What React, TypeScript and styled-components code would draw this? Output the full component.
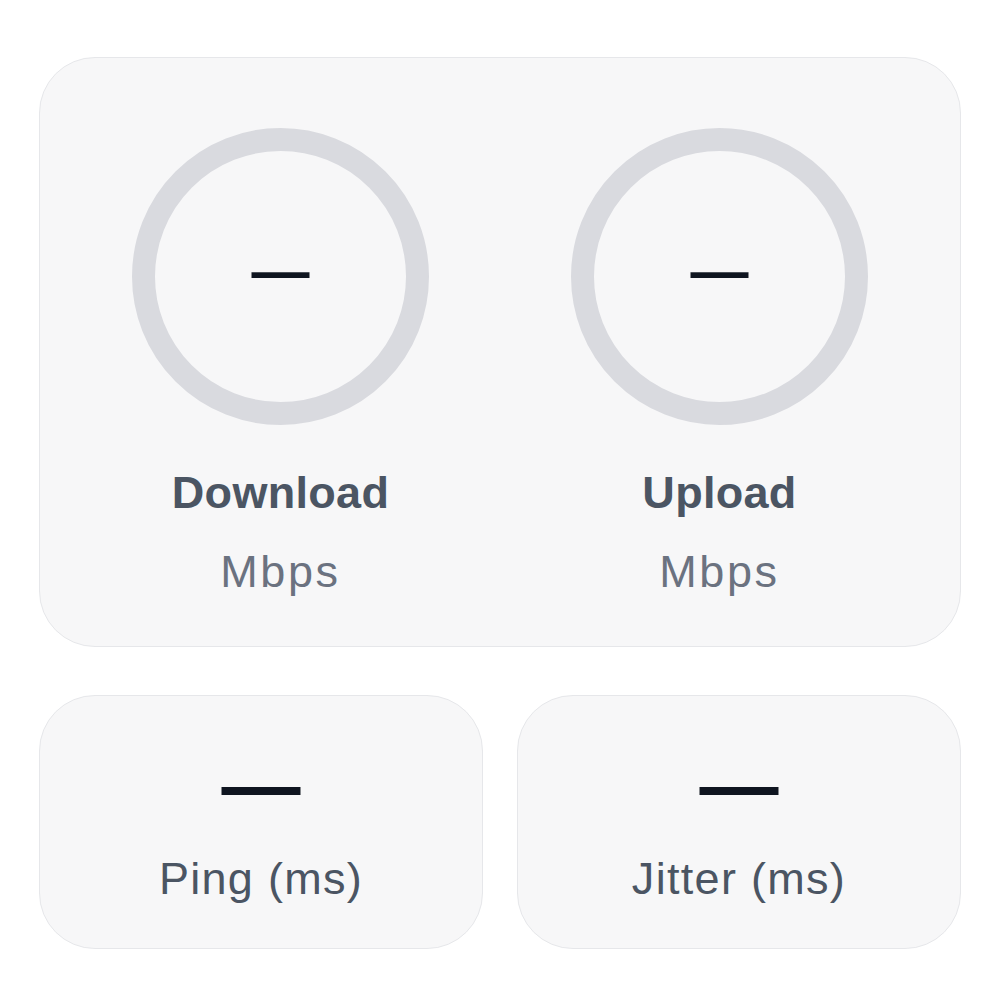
import React from "react";
import styled, { createGlobalStyle } from "styled-components";

const Global = createGlobalStyle`
  html, body { margin: 0; padding: 0; background: #ffffff; }
  body { font-family: "Liberation Sans", Arial, sans-serif; }
`;

const Page = styled.div`
  width: 1000px;
  box-sizing: border-box;
  padding: 57px 39px 0;
  display: flex;
  flex-direction: column;
  gap: 48px;
`;

const MainCard = styled.div`
  box-sizing: border-box;
  height: 590px;
  background: #f7f7f8;
  border: 1px solid #e6e7ea;
  border-radius: 56px;
  display: grid;
  grid-template-columns: 1fr 1fr;
  padding: 70px 56px 0;
  column-gap: 70px;
`;

const Gauge = styled.div`
  display: flex;
  flex-direction: column;
  align-items: center;
`;

const Ring = styled.div`
  box-sizing: border-box;
  width: 297px;
  height: 297px;
  border-radius: 50%;
  border: 23px solid #d9dadf;
  display: flex;
  align-items: center;
  justify-content: center;
  padding-bottom: 12px;
`;

const Dash = styled.div<{ $size: number }>`
  font-family: "Liberation Sans", Arial, sans-serif;
  font-weight: 700;
  font-size: ${(p) => p.$size}px;
  line-height: 1;
  color: #0f1520;
`;

const GaugeTitle = styled.div`
  margin-top: 41px;
  font-size: 45px;
  line-height: 54px;
  font-weight: 700;
  letter-spacing: 0.3px;
  color: #4b5563;
`;

const Unit = styled.div`
  margin-top: 25px;
  font-size: 45px;
  line-height: 54px;
  letter-spacing: 2.6px;
  color: #6b7280;
`;

const Row = styled.div`
  display: grid;
  grid-template-columns: 1fr 1fr;
  gap: 34px;
`;

const SmallCard = styled.div`
  box-sizing: border-box;
  height: 254px;
  background: #f7f7f8;
  border: 1px solid #e6e7ea;
  border-radius: 56px;
  display: flex;
  flex-direction: column;
  align-items: center;
  padding-top: 49px;
`;

const SmallLabel = styled.div`
  margin-top: 28px;
  font-size: 45px;
  line-height: 54px;
  letter-spacing: 1.3px;
  color: #4b5563;
`;

const GaugeBlock = ({ title }: { title: string }) => (
  <Gauge>
    <Ring>
      <Dash $size={58}>—</Dash>
    </Ring>
    <GaugeTitle>{title}</GaugeTitle>
    <Unit>Mbps</Unit>
  </Gauge>
);

const Stat = ({ label }: { label: string }) => (
  <SmallCard>
    <Dash $size={79}>—</Dash>
    <SmallLabel>{label}</SmallLabel>
  </SmallCard>
);

export default function App() {
  return (
    <>
      <Global />
      <Page>
        <MainCard>
          <GaugeBlock title="Download" />
          <GaugeBlock title="Upload" />
        </MainCard>
        <Row>
          <Stat label="Ping (ms)" />
          <Stat label="Jitter (ms)" />
        </Row>
      </Page>
    </>
  );
}
